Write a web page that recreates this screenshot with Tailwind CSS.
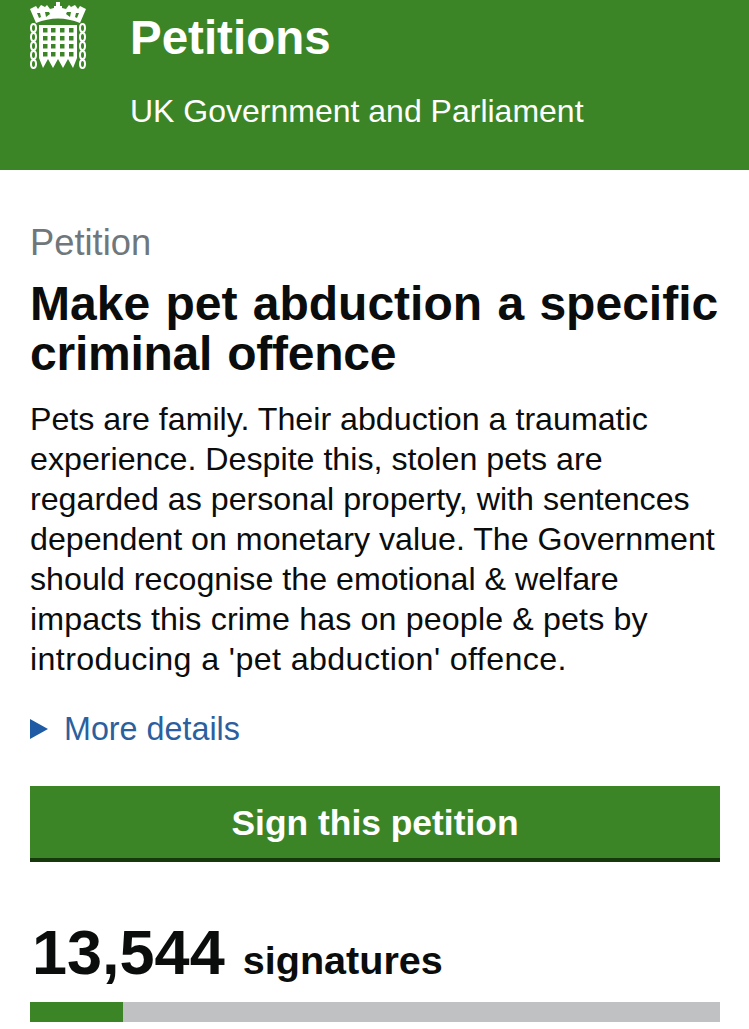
<!DOCTYPE html>
<html lang="en">
<head>
  <meta charset="UTF-8">
  <meta name="viewport" content="width=device-width, initial-scale=1.0">
  <title>Petitions</title>
  <script src="https://cdn.jsdelivr.net/npm/@tailwindcss/browser@4"></script>
</head>
<body class="bg-white font-['Liberation_Sans',Arial,sans-serif] text-[#0b0c0c] overflow-hidden">
  <!-- Header -->
  <header class="h-[170px] bg-[#3c8527] flex text-white">
    <div class="w-[130px] pl-[29px] shrink-0">
      <svg width="58" height="72" viewBox="29 0 58 72" fill="none">
        <!-- crown -->
        <path fill="#fff" fill-rule="evenodd" d="M30 9 L36 6 L38 9 L41 5 L45 7 L47 5 L50 9 L54 8 L54 6 L56 6 L56 2 L60 2 L60 6 L62 6 L62 8 L66 9 L69 5 L71 7 L75 5 L78 9 L80 6 L86 9 L80 23 Q58 14 36 23 Z
          M37 13 h3 l1 4 l-2 1 z M45 12 h4 l1 2 l-4 3 z M71 12 h-4 l-1 2 l4 3 z M79 13 h-3 l-1 4 l2 1 z"/>
        <!-- portcullis -->
        <path fill="#fff" fill-rule="evenodd" d="M39 25 H77 V58 L73 68 L68 59 L63 68 L58 59 L53 68 L48 59 L43 68 L39 58 Z
          M43 28 v4.500 h4.500 v-4.500 z M51 28 v4.500 h4.500 v-4.500 z M60 28 v4.500 h4.500 v-4.500 z M69 28 v4.500 h4.500 v-4.500 z
          M43 36 v4.500 h4.500 v-4.500 z M51 36 v4.500 h4.500 v-4.500 z M60 36 v4.500 h4.500 v-4.500 z M69 36 v4.500 h4.500 v-4.500 z
          M43 44 v4.500 h4.500 v-4.500 z M51 44 v4.500 h4.500 v-4.500 z M60 44 v4.500 h4.500 v-4.500 z M69 44 v4.500 h4.500 v-4.500 z
          M43 52 v4.500 h4.500 v-4.500 z M51 52 v4.500 h4.500 v-4.500 z M60 52 v4.500 h4.500 v-4.500 z M69 52 v4.500 h4.500 v-4.500 z"/>
        <!-- chains -->
        <g stroke="#fff" stroke-width="2">
          <ellipse cx="33.500" cy="28" rx="2.500" ry="4"/><ellipse cx="33.500" cy="37" rx="2.500" ry="4"/><ellipse cx="33.500" cy="46" rx="2.500" ry="4"/><ellipse cx="33.500" cy="55" rx="2.500" ry="4"/><ellipse cx="33.500" cy="64" rx="2.500" ry="4"/>
          <ellipse cx="82.500" cy="28" rx="2.500" ry="4"/><ellipse cx="82.500" cy="37" rx="2.500" ry="4"/><ellipse cx="82.500" cy="46" rx="2.500" ry="4"/><ellipse cx="82.500" cy="55" rx="2.500" ry="4"/><ellipse cx="82.500" cy="64" rx="2.500" ry="4"/>
        </g>
      </svg>
    </div>
    <div>
      <div class="text-[47.500px] leading-[52px] font-bold pt-[12px]">Petitions</div>
      <div class="text-[32px] leading-[40px] mt-[27px]">UK Government and Parliament</div>
    </div>
  </header>

  <main class="pl-[30px] pr-[29px] pt-[53px]">
    <div class="text-[36.300px] leading-[40px] text-[#6f777b]">Petition</div>
    <h1 class="text-[48px] leading-[50px] font-bold mt-[16px] [word-spacing:2px]">Make pet abduction a specific <span class="tracking-[-0.25px]">criminal offence</span></h1>
    <p class="text-[32.200px] leading-[40px] mt-[20px]">Pets are family. Their abduction a traumatic experience. Despite this, stolen pets are regarded as personal property, with sentences dependent on monetary value. The Government should recognise the emotional &amp; welfare <span class="tracking-[0.14px]">impacts this crime has on people &amp; pets by</span> <span class="tracking-[0.4px]">introducing a 'pet abduction' offence.</span></p>

    <div class="flex items-center mt-[30px] h-[40px]">
      <span class="w-0 h-0 border-y-[10px] border-y-transparent border-l-[18px] border-l-[#1f5ba4]"></span>
      <a href="#" class="ml-[16px] text-[32.300px] leading-[40px] text-[#2b5f9e]">More details</a>
    </div>

    <button class="block w-full h-[76px] mt-[37px] pt-[3px] bg-[#3c8527] border-b-4 border-[#15390b] text-white text-[35.400px] font-bold">Sign this petition</button>

    <div class="flex items-baseline mt-[56px] h-[68px]">
      <span class="text-[63px] leading-[68px] font-bold pl-[2px]">13,544</span>
      <span class="ml-[18px] text-[39.600px] font-bold">signatures</span>
    </div>

    <div class="h-[20px] mt-[16px] bg-[#bfc1c3]">
      <div class="h-full bg-[#3c8527]" style="width: 13.5%"></div>
    </div>
  </main>
</body>
</html>
